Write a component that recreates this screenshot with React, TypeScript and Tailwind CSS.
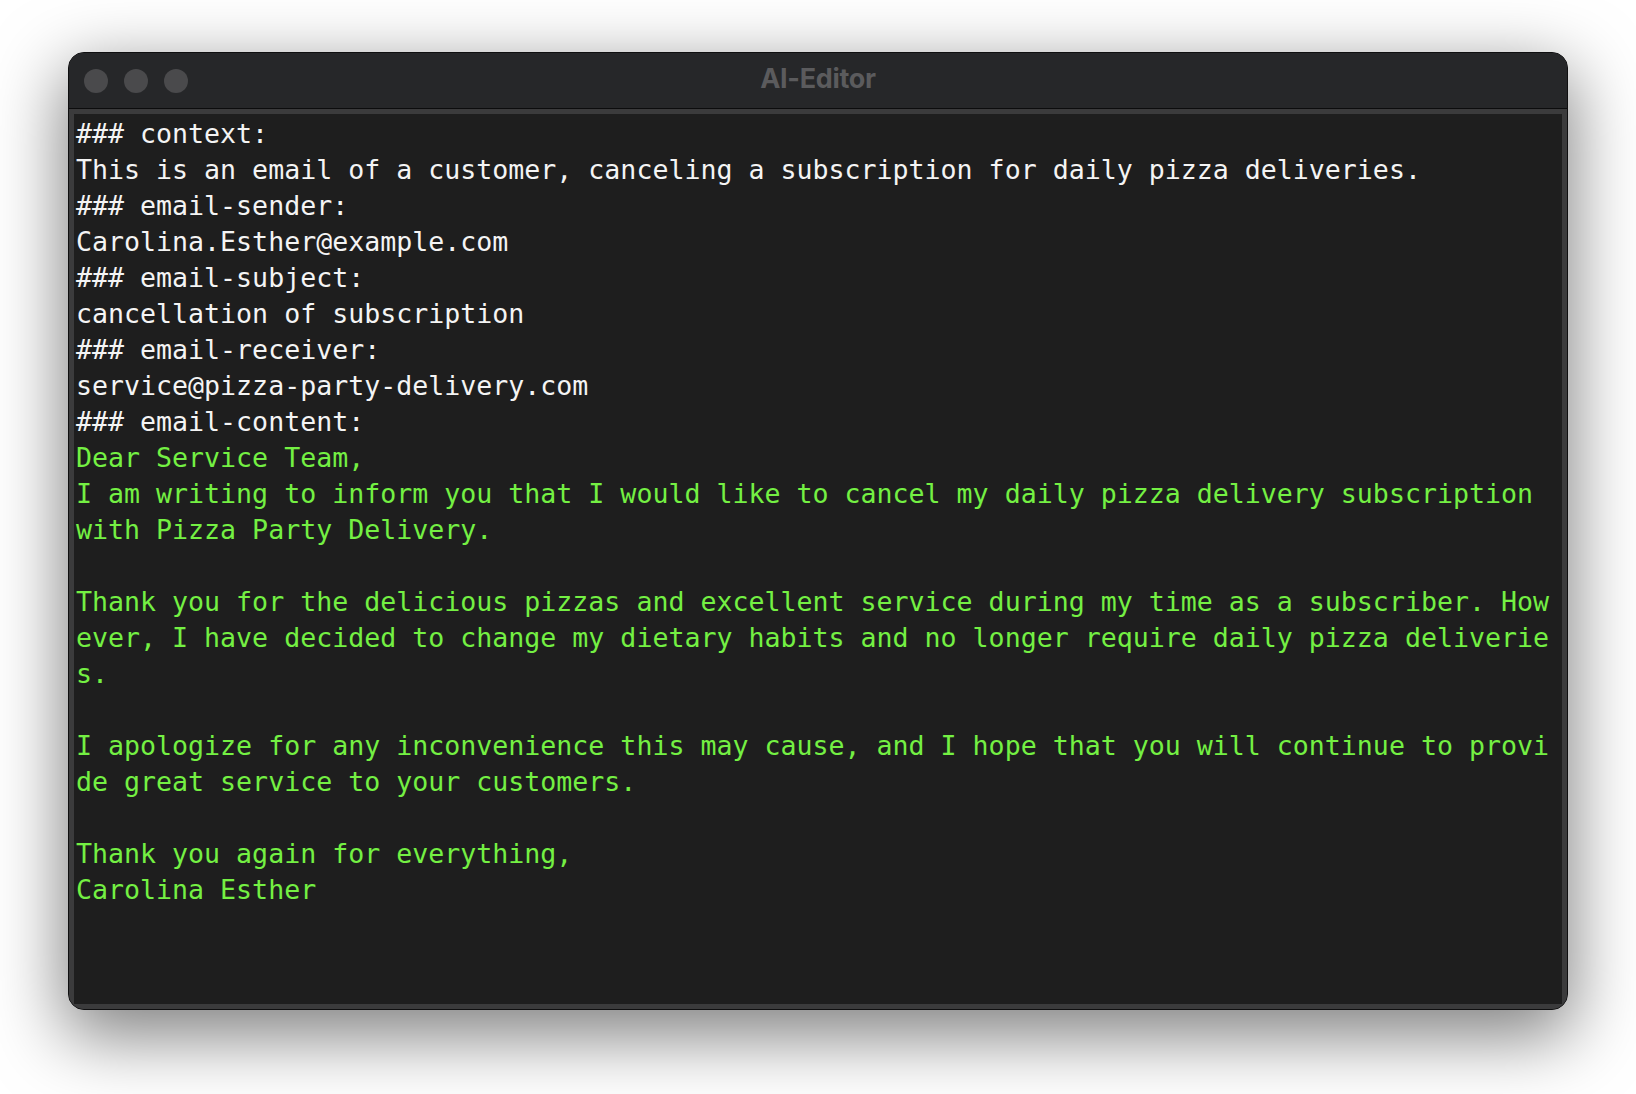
import React from 'react';

type Line = { text: string; green?: boolean };

const lines: Line[] = [
  { text: '### context:' },
  { text: 'This is an email of a customer, canceling a subscription for daily pizza deliveries.' },
  { text: '### email-sender:' },
  { text: 'Carolina.Esther@example.com' },
  { text: '### email-subject:' },
  { text: 'cancellation of subscription' },
  { text: '### email-receiver:' },
  { text: 'service@pizza-party-delivery.com' },
  { text: '### email-content:' },
  { text: 'Dear Service Team,', green: true },
  { text: 'I am writing to inform you that I would like to cancel my daily pizza delivery subscription', green: true },
  { text: 'with Pizza Party Delivery.', green: true },
  { text: '', green: true },
  { text: 'Thank you for the delicious pizzas and excellent service during my time as a subscriber. How', green: true },
  { text: 'ever, I have decided to change my dietary habits and no longer require daily pizza deliverie', green: true },
  { text: 's.', green: true },
  { text: '', green: true },
  { text: 'I apologize for any inconvenience this may cause, and I hope that you will continue to provi', green: true },
  { text: 'de great service to your customers.', green: true },
  { text: '', green: true },
  { text: 'Thank you again for everything,', green: true },
  { text: 'Carolina Esther', green: true },
];

function TrafficLights() {
  return (
    <div className="flex items-center gap-[16px]">
      <span className="w-[24px] h-[24px] rounded-full bg-[#4a4a4c]" />
      <span className="w-[24px] h-[24px] rounded-full bg-[#4a4a4c]" />
      <span className="w-[24px] h-[24px] rounded-full bg-[#4a4a4c]" />
    </div>
  );
}

export default function App() {
  return (
    <div className="w-full h-screen bg-white flex justify-center pt-[52px]">
      <div className="w-[1500px] h-[958px] rounded-[16px] border border-[#0f0f10] bg-[#3b3b3c] overflow-hidden shadow-[0_22px_70px_4px_rgba(0,0,0,0.5)] flex flex-col">
        {/* Title bar */}
        <div className="relative h-[55px] shrink-0 bg-[#262729] border-b border-[#0c0c0d] flex items-center pl-[15px] box-content">
          <TrafficLights />
          <div className="absolute inset-0 flex items-center justify-center pb-[4px] pointer-events-none">
            <span
              className="text-[27px] font-bold text-[#5b5b5d] leading-none tracking-[-0.3px]"
              style={{ fontFamily: 'Inter, "Liberation Sans", sans-serif' }}
            >
              AI-Editor
            </span>
          </div>
        </div>

        {/* Editor */}
        <div className="flex-1 p-[5px] bg-[#3b3b3c] flex">
          <div
            className="flex-1 bg-[#1e1e1e] pl-[2px] pt-[1.5px] text-[26.6px] leading-[36px]"
            style={{ fontFamily: '"DejaVu Sans Mono", "Liberation Mono", monospace' }}
          >
            {lines.map((line, i) => (
              <div
                key={i}
                className={`h-[36px] whitespace-pre ${line.green ? 'text-[#74f043]' : 'text-[#f4f4f4]'}`}
              >
                {line.text}
              </div>
            ))}
          </div>
        </div>
      </div>
    </div>
  );
}
